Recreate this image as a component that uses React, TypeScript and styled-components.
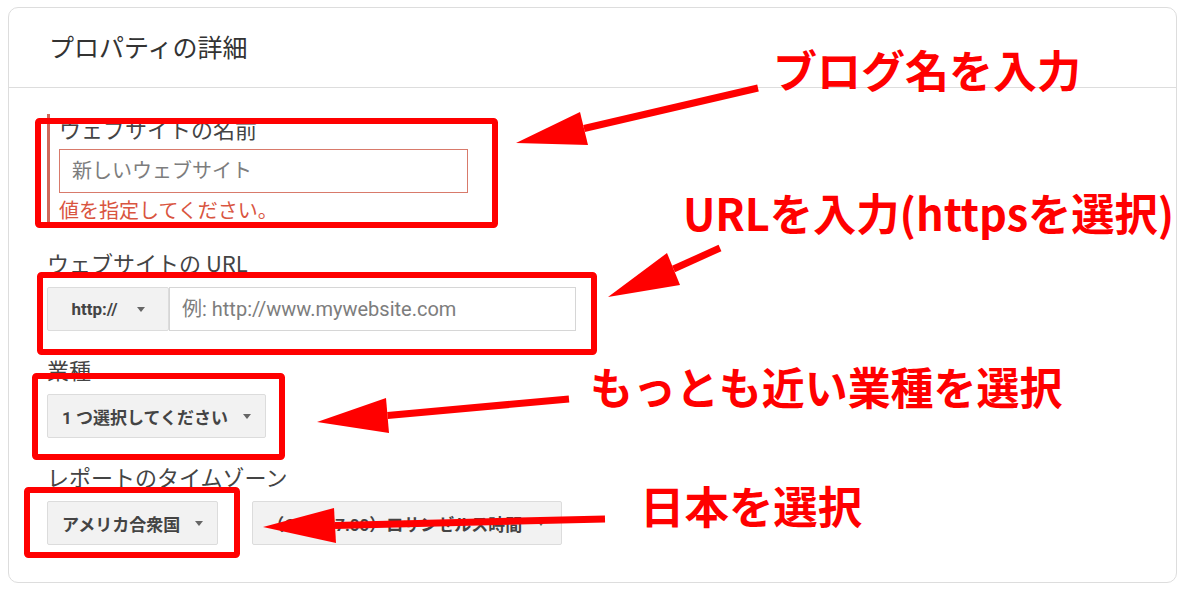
import React from "react";
import styled, { createGlobalStyle } from "styled-components";

const GlobalStyle = createGlobalStyle`
  html, body { margin: 0; padding: 0; background: #ffffff; }
  body {
    font-family: Roboto, "Noto Sans CJK JP", "Noto Sans", sans-serif;
    color: #333333;
  }
  * { box-sizing: border-box; }
`;

const Page = styled.div`
  position: relative;
  width: 1200px;
  height: 593px;
  padding: 7px 23px 10px 8px;
  overflow: hidden;
`;

const Card = styled.section`
  width: 1169px;
  height: 576px;
  border: 1px solid #dddddd;
  border-radius: 10px;
  background: #ffffff;
  display: flex;
  flex-direction: column;
`;

const CardHeader = styled.header`
  height: 80px;
  border-bottom: 1px solid #dddddd;
  display: flex;
  align-items: center;
  padding: 0 0 4px 40px;
`;

const Title = styled.h2`
  margin: 0;
  font-size: 25px;
  font-weight: 400;
  color: #333333;
  font-family: "Noto Sans CJK JP", Roboto, sans-serif;
`;

const CardBody = styled.div`
  display: flex;
  flex-direction: column;
  gap: 24px;
  padding: 26px 0 0 38px;
`;

const Field = styled.div<{ $error?: boolean }>`
  display: flex;
  flex-direction: column;
  align-items: flex-start;
  border-left: ${(p) => (p.$error ? "3px solid #cf6a5b" : "none")};
  padding-left: ${(p) => (p.$error ? "9px" : "0")};
`;

const Label = styled.label<{ $tight?: boolean }>`
  font-family: "Noto Sans CJK JP", Roboto, sans-serif;
  font-size: 22px;
  line-height: 28px;
  color: #444444;
  margin-bottom: ${(p) => (p.$tight ? "7px" : "11px")};
`;

const TextInput = styled.input<{ $width: number; $error?: boolean }>`
  width: ${(p) => p.$width}px;
  height: 44px;
  border: 1px solid ${(p) => (p.$error ? "#d87a6b" : "#d6d6d6")};
  border-radius: 0;
  padding: 0 12px;
  font-family: Roboto, "Noto Sans CJK JP", sans-serif;
  font-size: 20px;
  color: #333333;
  background: #ffffff;
  outline: none;
  &::placeholder {
    color: #7d7d7d;
  }
`;

const ErrorText = styled.div`
  margin-top: 3px;
  font-family: "Noto Sans CJK JP", Roboto, sans-serif;
  font-size: 20px;
  line-height: 28px;
  color: #d9553f;
`;

const InputGroup = styled.div`
  display: flex;
  align-items: stretch;
`;

const Row = styled.div`
  display: flex;
  align-items: center;
  gap: 34px;
`;

const SelectButton = styled.button<{ $width?: number; $center?: boolean }>`
  display: inline-flex;
  align-items: center;
  justify-content: ${(p) => (p.$center ? "center" : "flex-start")};
  gap: ${(p) => (p.$center ? "19px" : "15px")};
  height: 44px;
  width: ${(p) => (p.$width ? `${p.$width}px` : "auto")};
  padding: 0 ${(p) => (p.$center ? "0" : "14px")} 0 ${(p) => (p.$center ? "0" : "14px")};
  background: #f2f2f2;
  border: 1px solid #dcdcdc;
  border-radius: 2px;
  font-family: Roboto, "Noto Sans CJK JP", sans-serif;
  font-size: 17px;
  font-weight: 700;
  color: #444444;
  cursor: pointer;
`;

const Caret = styled.span`
  display: inline-block;
  width: 0;
  height: 0;
  border-left: 4.5px solid transparent;
  border-right: 4.5px solid transparent;
  border-top: 5px solid #666666;
`;

const Overlay = styled.svg`
  position: absolute;
  left: 0;
  top: 0;
  pointer-events: none;
`;

const Note = styled.span<{ $squeeze?: number }>`
  position: absolute;
  font-family: "Noto Sans CJK JP", sans-serif;
  font-weight: 700;
  font-size: 44px;
  line-height: 1;
  color: #ff0000;
  white-space: nowrap;
  transform-origin: left center;
  transform: scaleX(${(p) => p.$squeeze ?? 1});
`;

type Box = { x: number; y: number; w: number; h: number };
type Arrow = { tail: [number, number]; tip: [number, number]; b1: [number, number]; b2: [number, number] };

const boxes: Box[] = [
  { x: 38, y: 121, w: 457, h: 104 },
  { x: 40, y: 275, w: 554, h: 77 },
  { x: 35, y: 376, w: 247, h: 81 },
  { x: 27, y: 490, w: 210, h: 65 },
];

const arrows: Arrow[] = [
  { tail: [758, 88], tip: [516, 143], b1: [580, 112], b2: [588, 145] },
  { tail: [720, 248], tip: [608, 297], b1: [667, 253], b2: [680, 285] },
  { tail: [569, 399], tip: [317, 422], b1: [386, 398], b2: [389, 433] },
  { tail: [605, 519], tip: [263, 527], b1: [334, 508], b2: [336, 543] },
];

const notes = [
  { text: "ブログ名を入力", left: 773, top: 47, squeeze: 1 },
  { text: "URLを入力(httpsを選択)", left: 683, top: 190, squeeze: 0.983 },
  { text: "もっとも近い業種を選択", left: 590, top: 364, squeeze: 0.976 },
  { text: "日本を選択", left: 640, top: 483, squeeze: 1.01 },
];

export default function App() {
  return (
    <>
      <GlobalStyle />
      <Page>
        <Card>
          <CardHeader>
            <Title>プロパティの詳細</Title>
          </CardHeader>
          <CardBody>
            <Field $error>
              <Label $tight>ウェブサイトの名前</Label>
              <TextInput $width={409} $error placeholder="新しいウェブサイト" />
              <ErrorText>値を指定してください。</ErrorText>
            </Field>
            <Field>
              <Label>ウェブサイトの URL</Label>
              <InputGroup>
                <SelectButton $width={122} $center>
                  http://
                  <Caret />
                </SelectButton>
                <TextInput $width={407} placeholder="例: http://www.mywebsite.com" />
              </InputGroup>
            </Field>
            <Field>
              <Label>業種</Label>
              <SelectButton>
                1 つ選択してください
                <Caret />
              </SelectButton>
            </Field>
            <Field>
              <Label>レポートのタイムゾーン</Label>
              <Row>
                <SelectButton>
                  アメリカ合衆国
                  <Caret />
                </SelectButton>
                <SelectButton $width={310}>
                  （GMT-07:00）ロサンゼルス時間
                  <Caret />
                </SelectButton>
              </Row>
            </Field>
          </CardBody>
        </Card>

        <Overlay width={1200} height={593} viewBox="0 0 1200 593">
          {boxes.map((b, i) => (
            <rect
              key={i}
              x={b.x}
              y={b.y}
              width={b.w}
              height={b.h}
              fill="none"
              stroke="#ff0000"
              strokeWidth={6}
              rx={1.5}
            />
          ))}
          {arrows.map((a, i) => {
            const cx = (a.b1[0] + a.b2[0]) / 2;
            const cy = (a.b1[1] + a.b2[1]) / 2;
            return (
              <g key={i} fill="#ff0000">
                <line x1={a.tail[0]} y1={a.tail[1]} x2={cx} y2={cy} stroke="#ff0000" strokeWidth={7} />
                <polygon points={`${a.tip[0]},${a.tip[1]} ${a.b1[0]},${a.b1[1]} ${a.b2[0]},${a.b2[1]}`} />
              </g>
            );
          })}
        </Overlay>

        {notes.map((n) => (
          <Note key={n.text} $squeeze={n.squeeze} style={{ left: n.left, top: n.top }}>
            {n.text}
          </Note>
        ))}
      </Page>
    </>
  );
}
